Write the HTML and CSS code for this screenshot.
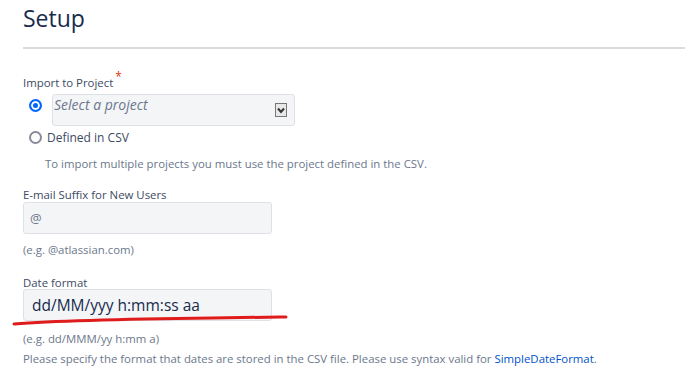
FILE: index.html
```html
<!DOCTYPE html>
<html lang="en">
<head>
    <meta charset="UTF-8">
    <meta name="viewport" content="width=device-width, initial-scale=1.0">
    <title>Setup</title>
    <link rel="stylesheet" href="styles.css">
</head>
<body>
<div class="page">
    <h1 class="title">Setup</h1>
    <form class="setup-form">
        <div class="field project-field">
            <label class="field-label">Import to Project<span class="req">*</span></label>
            <div class="radio-row">
                <span class="radio checked"></span>
                <div class="select">
                    <span class="placeholder">Select a project</span>
                    <span class="select-arrow">
                        <svg width="12" height="14" viewBox="0 0 12 14">
                            <rect x="0.5" y="0.5" width="11" height="13" fill="#e8e8e8" stroke="#777"/>
                            <path d="M3 5.5 L6 9 L9 5.5" fill="none" stroke="#333" stroke-width="2"/>
                        </svg>
                    </span>
                </div>
            </div>
            <div class="radio-row plain">
                <span class="radio"></span>
                <span class="radio-text">Defined in CSV</span>
            </div>
            <div class="hint indent">To import multiple projects you must use the project defined in the CSV.</div>
        </div>

        <div class="field email-field">
            <label class="field-label">E-mail Suffix for New Users</label>
            <div class="input">@</div>
            <div class="hint">(e.g. @atlassian.com)</div>
        </div>

        <div class="field date-field">
            <label class="field-label">Date format</label>
            <div class="input date-input">dd/MM/yyy h:mm:ss aa</div>
            <svg class="scribble" width="280" height="14" viewBox="0 0 280 14">
                <path d="M2 11 C 40 8, 120 6, 200 5 S 260 4, 274 4" fill="none" stroke="#e01b1b" stroke-width="3" stroke-linecap="round"/>
            </svg>
            <div class="hint hint-gap">(e.g. dd/MMM/yy h:mm a)</div>
            <div class="hint">Please specify the format that dates are stored in the CSV file. Please use syntax valid for <a href="#">SimpleDateFormat</a>.</div>
        </div>
    </form>
</div>
</body>
</html>
```

FILE: styles.css
```css
body { margin:0; background:#fff; font-family:"Open Sans", "Noto Sans", Arial, sans-serif; color:#172b4d; }
.page { padding:0 0 0 23px; }
.title { margin:0; padding-top:2px; font-size:23px; font-weight:400; line-height:32px; color:#172b4d; border-bottom:2px solid #dcdcdc; padding-bottom:13px; }
.setup-form { padding-top:26px; }
.field { margin-bottom:12px; }
.project-field { margin-bottom:14px; }
.email-field { margin-bottom:16px; }
.field-label { display:block; font-size:11.4px; line-height:16px; color:#3d4a63; }
.req { color:#de350b; font-size:12px; position:relative; top:-6px; margin-left:2px; }
.radio-row { display:flex; align-items:center; gap:10px; padding-left:6px; }
.radio-row.plain { margin-top:1px; height:20px; }
.radio { width:9px; height:9px; border-radius:50%; border:2px solid #8a8a9a; background:#fff; flex:none; }
.radio.checked { border-color:#0065ff; background:#0065ff; box-shadow:inset 0 0 0 2px #fff; }
.radio-row:first-of-type { align-items:flex-start; margin-top:3px; }
.radio-row:first-of-type .radio { margin-top:5px; }
.select { width:241px; height:30px; background:#f4f5f7; border:1px solid #dfe1e6; border-radius:3px; display:flex; justify-content:space-between; position:relative; }
.placeholder { font-style:italic; font-size:14px; color:#6b778c; line-height:20px; padding-left:1px; }
.select-arrow { position:absolute; right:7px; top:8px; line-height:0; }
.radio-text { font-size:12px; color:#3d4a63; margin-left:-5px; }
.hint { font-size:11.4px; line-height:18px; color:#6b778c; }
.hint.indent { padding-left:22px; margin-top:8px; }
.hint a { color:#0052cc; text-decoration:none; }
.input { width:241px; height:30px; background:#f4f5f7; border:1px solid #dfe1e6; border-radius:3px; margin-top:-1px; padding-left:6px; font-size:13px; line-height:30px; color:#6b778c; margin-bottom:7px; }
.date-field { position:relative; }
.date-input { font-size:15.5px; color:#172b4d; padding-left:8px; width:239px; margin-top:-2px; margin-bottom:9px; }
.scribble { position:absolute; left:-11px; top:38px; }
.hint-gap { margin-bottom:2px; }
```
